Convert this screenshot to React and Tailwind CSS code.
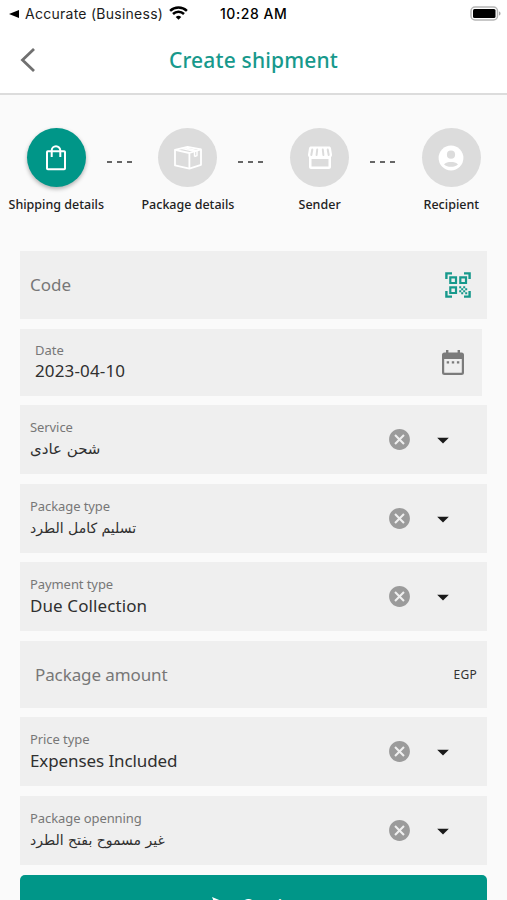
import clsx from 'clsx';
import { MdCancel, MdArrowDropDown } from 'react-icons/md';

const BagIcon = () => (
	<svg width="22" height="26" viewBox="0 0 22 26" fill="none" stroke="currentColor" strokeWidth="2">
		<rect x="2" y="6.2" width="18" height="18" rx="0.8" />
		<path d="M6.7 12V5.6a4.3 4.3 0 0 1 8.6 0V12" />
	</svg>
);

const BoxIcon = () => (
	<svg
		width="30"
		height="26"
		viewBox="0 0 30 26"
		fill="none"
		stroke="currentColor"
		strokeWidth="1.8"
		strokeLinejoin="round"
	>
		<path d="M2 4.8 14.5 1.8 28 4.4v15.4L16.4 23.600 2 20.4z" />
		<path d="M2 4.8 16.4 8 28 4.4M16.4 8v15.600" />
		<path d="M8.2 3.4 21.500 6.400v5.200M11.500 2.600l12.500 3v5l-2.500 1" strokeWidth="1.400" />
	</svg>
);

const StoreIcon = () => (
	<svg width="26" height="26" viewBox="0 0 26 26">
		<path
			fillRule="evenodd"
			fill="currentColor"
			d="M4 1.500h18c1 0 1.800.7 2 1.700l1 6.300c.1 1-.3 2-1 2.700V22c0 1.100-.9 2-2 2H4c-1.100 0-2-.9-2-2v-9.800c-.7-.7-1.100-1.700-1-2.700l1-6.300C2.200 2.200 3 1.500 4 1.500zM4.500 14v7.500h17V14z"
		/>
		<path
			d="M5.300 4.500 4.300 10M10.200 4.500l-.6 5.500M15.800 4.500l.6 5.500M20.700 4.500l1 5.500"
			stroke="#dcdcdc"
			strokeWidth="2"
			strokeLinecap="round"
		/>
	</svg>
);

const PersonIcon = () => (
	<svg width="26" height="26" viewBox="0 0 26 26">
		<circle cx="13" cy="13" r="12.400" fill="currentColor" />
		<circle cx="13" cy="9.700" r="4.100" fill="#dcdcdc" />
		<path d="M6 19.400c1.400-1.900 4.500-2.500 7-2.500s5.600.6 7 2.500c-1.800 1.600-4.200 2.400-7 2.400s-5.200-.8-7-2.400z" fill="#dcdcdc" />
	</svg>
);

const QrScanIcon = () => (
	<svg width="26" height="26" viewBox="0 0 26 26" fill="none" stroke="#17998c" strokeWidth="2.400">
		<path d="M1.400 7V1.400H7M19 1.400h5.600V7M1.400 19v5.600H7M24.600 19v5.600H19" />
		<path d="M5.300 5.300h5.700V11H5.300zM15.300 5.300H21V11h-5.700zM5.300 15.300H11V21H5.300z" strokeWidth="2.200" />
		<path
			d="M14.200 14.200h2v2h-2zM18.200 14.200h2v2h-2zM16.200 16.200h2v2h-2zM20.200 16.200h2v2h-2zM14.200 18.200h2v2h-2zM18.200 18.200h2v2h-2zM16.200 20.200h2v2h-2zM20.200 20.200h2v2h-2z"
			fill="#17998c"
			stroke="none"
		/>
	</svg>
);

const CalendarIcon = () => (
	<svg width="22" height="26" viewBox="0 0 22 26" fill="#7b7b7b">
		<path
			fillRule="evenodd"
			d="M4 0h2.400v2.500h9.200V0H18v2.500h1.500A2.500 2.500 0 0 1 22 5v17.500a2.500 2.500 0 0 1-2.500 2.500h-17A2.500 2.500 0 0 1 0 22.500V5a2.500 2.500 0 0 1 2.500-2.500H4zM2.200 9v13.200c0 .4.300.6.600.6h16.400c.3 0 .6-.2.600-.6V9z"
		/>
		<path d="M4.700 11.200h2.400v2.400H4.700zM9.800 11.200h2.400v2.400H9.800zM14.900 11.200h2.400v2.400h-2.400z" />
	</svg>
);

const STEPS = [
	{ label: 'Shipping details', icon: <BagIcon />, active: true },
	{ label: 'Package details', icon: <BoxIcon /> },
	{ label: 'Sender', icon: <StoreIcon /> },
	{ label: 'Recipient', icon: <PersonIcon /> },
];

const StatusBar = () => (
	<div className="flex h-[27px] items-center font-['Inter',sans-serif] text-black">
		<div className="flex w-[220px] shrink-0 items-center pl-[9px]">
			<svg width="10" height="8" viewBox="0 0 10 8">
				<path d="M0 4 10 0v8z" />
			</svg>
			<span className="ml-[6px] text-[14px] tracking-[0.26px] whitespace-nowrap text-[#1c1c1c]">
				Accurate (Business)
			</span>
			<svg className="-mt-0.5 ml-[6px] shrink-0" width="19" height="14" viewBox="0 0 19 14">
				<path d="M9.500 13.800 6.700 10.900a4.200 4.200 0 0 1 5.600 0z" />
				<path d="M4 8a8 8 0 0 1 11 0M1.100 4.800a12.200 12.200 0 0 1 16.800 0" fill="none" stroke="black" strokeWidth="2.500" />
			</svg>
		</div>
		<span className="text-[14px] font-medium tracking-[0.55px]">10:28 AM</span>
		<svg className="mr-[5px] ml-auto" width="32" height="15" viewBox="0 0 32 15">
			<rect x="1" y="1" width="26.500" height="13" rx="4" fill="white" stroke="#b5b5b5" strokeWidth="1.500" />
			<rect x="3" y="3" width="22.500" height="9" rx="1.500" />
			<path d="M29 5.500c2 .5 2 3.500 0 4z" fill="#a5a5a5" />
		</svg>
	</div>
);

const Stepper = () => (
	<div className="flex h-[156px] shrink-0 pt-[33px]">
		{STEPS.map((step, i) => (
			<div key={step.label} className={clsx('flex shrink-0', i < 3 && 'w-[131.700px]')}>
				<div className="flex w-[112.500px] shrink-0 flex-col items-center">
					<div
						className={clsx(
							'flex size-[59px] items-center justify-center rounded-full text-white',
							step.active ? 'bg-[#009688] shadow-[0_2px_4px_rgba(0,0,0,0.3)]' : 'bg-[#dcdcdc]'
						)}
					>
						{step.icon}
					</div>
					<span className="mt-2 text-[12.500px] leading-5 font-medium whitespace-nowrap text-[#222]">
						{step.label}
					</span>
				</div>
				{i < 3 && (
					<div className="-ml-[6px] flex shrink-0 gap-[5px] pt-[33px]">
						<i className="h-0.5 w-[5px] bg-[#666]" />
						<i className="h-0.5 w-[5px] bg-[#666]" />
						<i className="h-0.5 w-[5px] bg-[#666]" />
					</div>
				)}
			</div>
		))}
	</div>
);

const SelectField = ({ label, value, valueClass = 'text-[17px] leading-[26px]', className }) => (
	<div className={clsx('flex h-[69px] items-center bg-[#efefef] pl-[10px]', className)}>
		<div className="flex flex-1 flex-col pb-0.5">
			<span className="text-[13px] leading-[18px] tracking-[-0.08px] text-[#777]">{label}</span>
			<span className={clsx('h-6 text-[#303030]', valueClass)}>{value}</span>
		</div>
		<MdCancel className="mr-[17px] size-[25px] text-[#9b9b9b]" />
		<MdArrowDropDown className="mr-[30px] size-[28px] text-[#1a1a1a]" />
	</div>
);

const App = () => (
	<div className="flex h-[900px] w-[507px] flex-col overflow-hidden bg-[#fafafa] font-['Noto_Sans',sans-serif]">
		<header className="h-[95px] shrink-0 border-b-2 border-[#dcdcdc] bg-white">
			<StatusBar />
			<div className="flex h-[66px] items-center">
				<svg className="ml-5 shrink-0" width="15" height="24" viewBox="0 0 15 24">
					<path d="M14 1 2.500 12 14 23" fill="none" stroke="#707070" strokeWidth="2.800" />
				</svg>
				<h1 className="mr-[35px] flex-1 pt-0.5 text-center text-[21px] font-medium tracking-[0.16px] text-[#17998c]">
					Create shipment
				</h1>
			</div>
		</header>

		<Stepper />

		<main className="flex shrink-0 flex-col px-5">
			<div className="flex h-[68px] items-center justify-between bg-[#efefef] pr-4 pl-[10px]">
				<span className="text-[17px] text-[#777]">Code</span>
				<QrScanIcon />
			</div>

			<div className="mt-[10px] mr-[5px] flex h-[67px] items-center justify-between bg-[#efefef] pr-[18px] pl-[15px]">
				<div className="flex flex-col pb-0.5">
					<span className="text-[13px] leading-[18px] text-[#777]">Date</span>
					<span className="text-[17px] leading-6 tracking-[0.15px] text-[#303030]">2023-04-10</span>
				</div>
				<CalendarIcon />
			</div>

			<SelectField
				className="mt-[9px]"
				label="Service"
				value="شحن عادى"
				valueClass="font-['DejaVu_Sans',sans-serif] text-[15px] leading-[26px]"
			/>
			<SelectField
				className="mt-[10px]"
				label="Package type"
				value="تسليم كامل الطرد"
				valueClass="font-['DejaVu_Sans',sans-serif] text-[14px] leading-[26px]"
			/>
			<SelectField
				className="mt-[9px]"
				label="Payment type"
				value="Due Collection"
				valueClass="text-[17px] leading-[26px] tracking-[0.1px]"
			/>

			<div className="mt-[10px] flex h-[67px] items-center justify-between bg-[#efefef] pr-[10px] pl-[15px]">
				<span className="text-[17px] tracking-[-0.1px] text-[#777]">Package amount</span>
				<span className="text-[12px] tracking-[0.3px] text-[#333]">EGP</span>
			</div>

			<SelectField
				className="mt-[9px]"
				label="Price type"
				value="Expenses Included"
				valueClass="text-[17px] leading-[26px] tracking-[-0.1px]"
			/>
			<SelectField
				className="mt-[10px]"
				label="Package openning"
				value="غير مسموح بفتح الطرد"
				valueClass="font-['DejaVu_Sans',sans-serif] text-[14px] leading-[26px]"
			/>

			<button className="mt-[10px] flex h-[59px] items-center justify-center gap-3 rounded-[5px] bg-[#009688] pl-4 text-[16px] font-medium text-white">
				<svg width="18" height="15" viewBox="0 0 18 15" fill="currentColor">
					<path d="m0 0 18 7.500L0 15l3-7.500z" />
				</svg>
				Continue
			</button>
		</main>
	</div>
);

export default App;
